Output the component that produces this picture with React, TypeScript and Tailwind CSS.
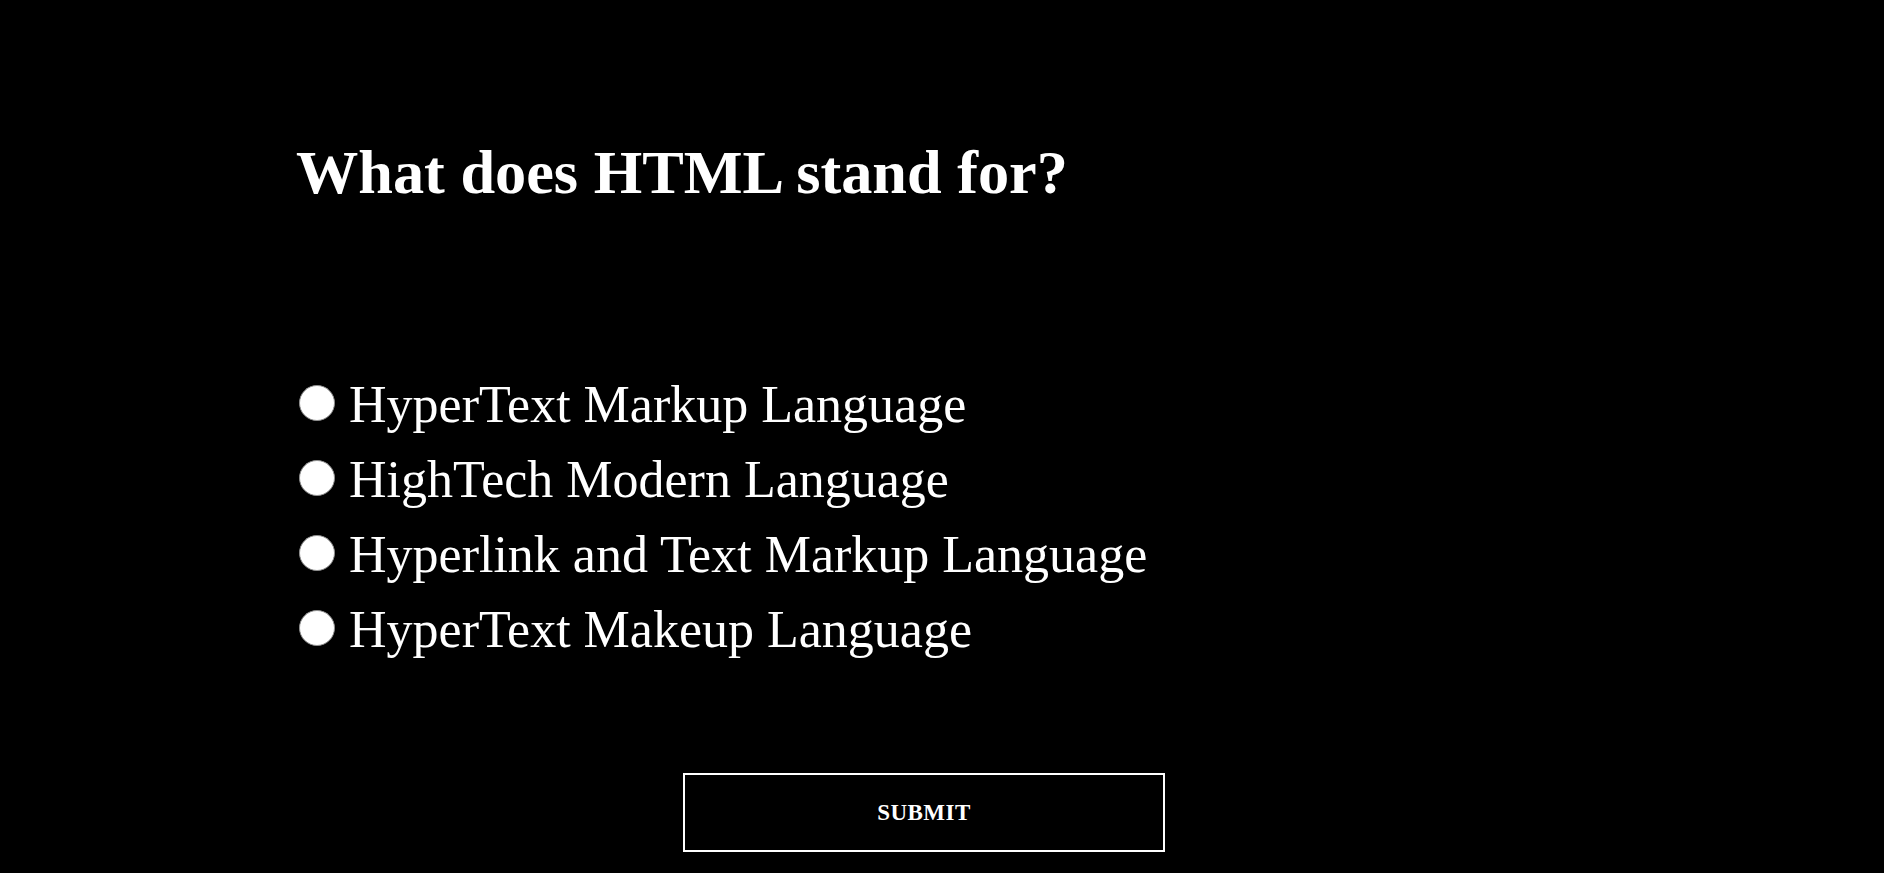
const options = [
  'HyperText Markup Language',
  'HighTech Modern Language',
  'Hyperlink and Text Markup Language',
  'HyperText Makeup Language',
]

export default function App() {
  return (
    <div className="min-h-screen bg-black text-white font-['Liberation_Serif','Times_New_Roman',serif]">
      <div className="ml-[296px] w-[1256px] pt-[136px] flex flex-col">
        <h1 className="text-[62.3px] leading-[72px] font-bold">What does HTML stand for?</h1>

        <div className="mt-[159px] flex flex-col">
          {options.map((opt) => (
            <label key={opt} className="block text-[52px] leading-[75px] whitespace-nowrap">
              <input
                type="radio"
                name="answer"
                className="appearance-none inline-block align-baseline w-9 h-9 ml-[3px] mr-[14px] mb-px rounded-full bg-white border border-[#8f8f8f]"
              />
              {opt}
            </label>
          ))}
        </div>

        <button className="self-center mt-[106px] w-[482px] h-[79px] pt-[2px] border-2 border-white bg-black text-white text-[23px] tracking-[0.5px] font-bold uppercase">
          Submit
        </button>
      </div>
    </div>
  )
}
